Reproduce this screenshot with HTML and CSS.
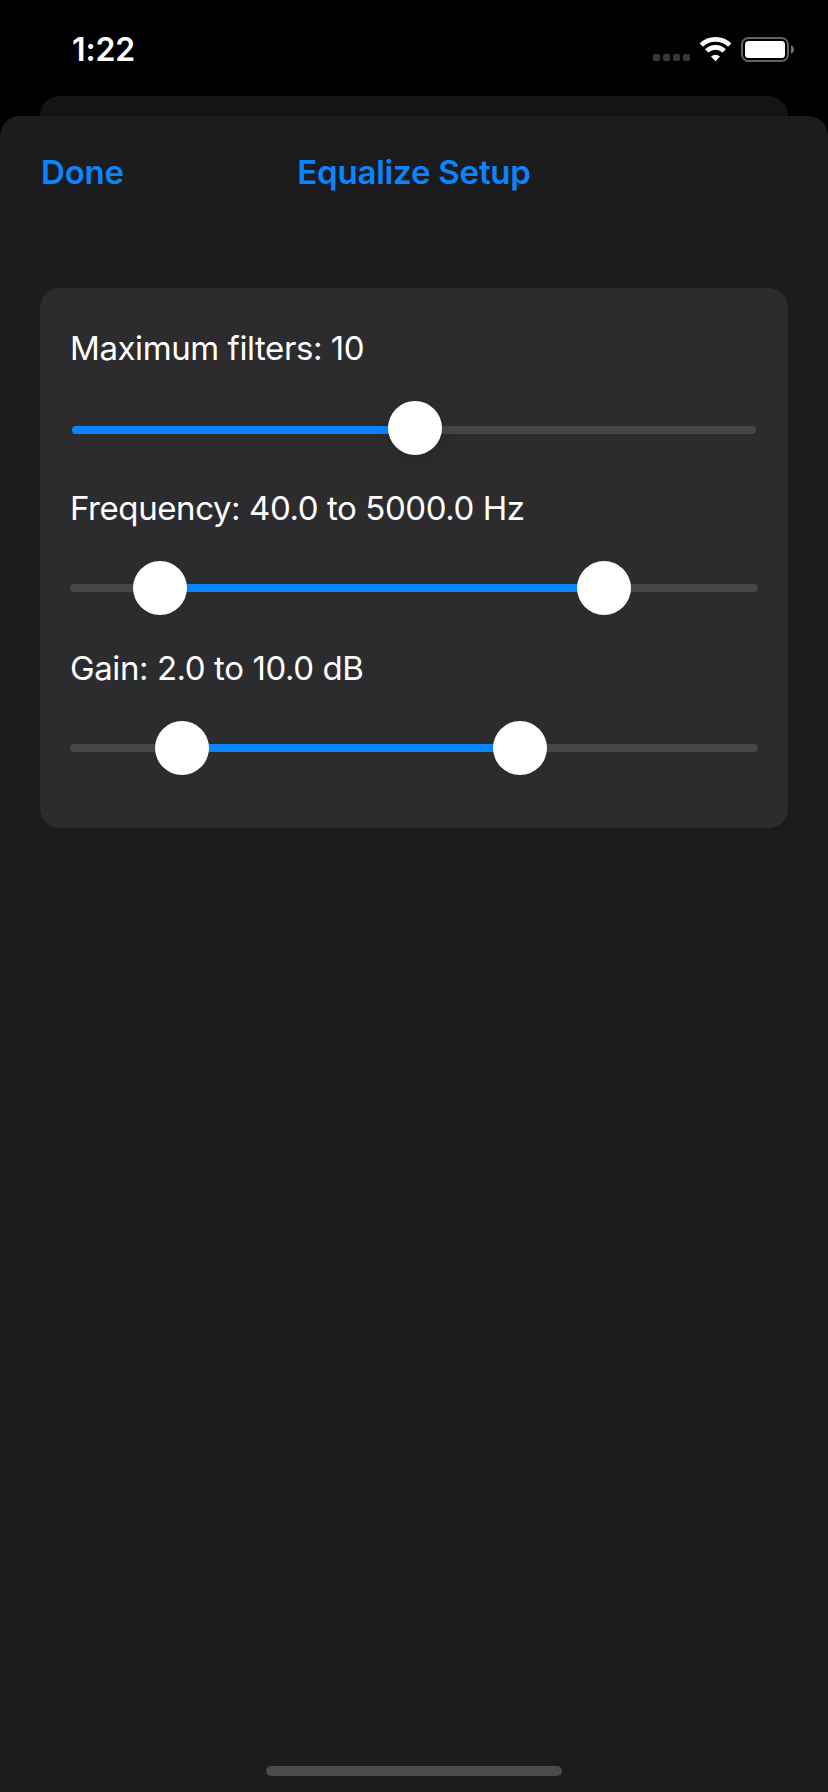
FILE: index.html
```html
<!DOCTYPE html>
<html lang="en">
<head>
<meta charset="utf-8">
<title>Equalize Setup</title>
<link rel="stylesheet" href="styles.css">
</head>
<body>
<div class="screen">
  <header class="status">
    <span class="time">1:22</span>
    <svg class="status-icons" width="146" height="28" viewBox="0 0 146 28" aria-hidden="true">
      <g fill="#373737">
        <rect x="3" y="18" width="7" height="7" rx="1.8"/>
        <rect x="13" y="18" width="7" height="7" rx="1.8"/>
        <rect x="23" y="18" width="7" height="7" rx="1.8"/>
        <rect x="33" y="18" width="7" height="7" rx="1.8"/>
      </g>
      <g fill="none" stroke="#fff" stroke-width="4.8">
        <path d="M51.3 9.1 A20.4 20.4 0 0 1 79.7 9.1"/>
        <path d="M56.8 14.9 A12.3 12.3 0 0 1 74.2 14.9"/>
      </g>
      <path d="M65.5 25.2 L61 20.6 A6.6 6.6 0 0 1 70 20.6 Z" fill="#fff"/>
      <rect x="92" y="2" width="46" height="23" rx="6.5" fill="none" stroke="#636363" stroke-width="2"/>
      <rect x="95" y="5" width="40" height="17" rx="3.5" fill="#fff"/>
      <path d="M141 9.2 C145 10.8 145 16.2 141 17.8 Z" fill="#737373"/>
    </svg>
  </header>
  <div class="back-sheet"></div>
  <main class="sheet">
    <nav class="navbar">
      <span class="done">Done</span>
      <h1 class="title">Equalize Setup</h1>
    </nav>
    <section class="card">
      <div class="label">Maximum filters: 10</div>
      <div class="slider slider-single">
        <b class="fill rounded" style="width:318px"></b><i class="thumb"></i><i class="rest last"></i>
      </div>
      <div class="label">Frequency: 40.0 to 5000.0 Hz</div>
      <div class="slider">
        <i class="rest" style="width:65px"></i><i class="thumb"></i><b class="fill" style="width:394px"></b><i class="thumb"></i><i class="rest last"></i>
      </div>
      <div class="label">Gain: 2.0 to 10.0 dB</div>
      <div class="slider">
        <i class="rest" style="width:87px"></i><i class="thumb"></i><b class="fill" style="width:288px"></b><i class="thumb"></i><i class="rest last"></i>
      </div>
    </section>
    <div class="home-indicator"></div>
  </main>
</div>
</body>
</html>
```

FILE: styles.css
```css
* {
  box-sizing: border-box;
}

body {
  margin: 0;
  background: #000;
  color: #fff;
  font-family: Inter, "Liberation Sans", sans-serif;
}

.screen {
  display: flex;
  flex-direction: column;
  width: 828px;
  height: 1792px;
  overflow: hidden;
}

.status {
  display: flex;
  justify-content: space-between;
  align-items: flex-start;
  height: 96px;
  padding: 30px 32px 0 72px;
}

.time {
  font-size: 32px;
  font-weight: 600;
  line-height: 40px;
  letter-spacing: -0.1px;
}

.status-icons {
  margin-top: 6px;
}

.back-sheet {
  height: 20px;
  margin: 0 40px;
  border-radius: 20px 20px 0 0;
  background: #141414;
}

.sheet {
  display: flex;
  flex: 1;
  flex-direction: column;
  padding: 0 40px;
  border-radius: 20px 20px 0 0;
  background: #1c1c1e;
}

.navbar {
  display: grid;
  grid-template-columns: 1fr auto 1fr;
  align-items: center;
  height: 112px;
  margin-bottom: 60px;
  color: #0a84ff;
  white-space: nowrap;
}

.done,
.title {
  margin: 0;
  font-size: 33px;
  font-weight: 600;
  line-height: 40px;
  letter-spacing: -0.2px;
}

.done {
  padding-left: 1px;
}

.card {
  height: 540px;
  padding: 20px 30px 40px;
  border-radius: 20px;
  background: #2c2c2e;
}

.label {
  height: 80px;
  font-size: 33px;
  line-height: 80px;
  letter-spacing: -0.42px;
  white-space: nowrap;
}

.slider {
  display: flex;
  align-items: center;
  height: 80px;
}

.slider-single {
  padding: 0 2px;
}

.slider-single .fill,
.slider-single .rest {
  margin-top: 4px;
}

.fill,
.rest {
  flex: none;
  height: 8px;
}

.fill {
  background: #0a84ff;
}

.fill.rounded,
.rest {
  border-radius: 4px 0 0 4px;
}

.rest {
  background: #464648;
}

.rest.last {
  flex: 1;
  border-radius: 0 4px 4px 0;
}

.thumb {
  position: relative;
  flex: none;
  width: 54px;
  height: 54px;
  margin: 0 -2px;
  border-radius: 50%;
  background: #fff;
}

.slider-single .thumb {
  box-shadow: 0 8px 20px rgba(0, 0, 0, 0.12);
}

.home-indicator {
  align-self: center;
  width: 296px;
  height: 10px;
  margin: auto 0 16px;
  border-radius: 5px;
  background: #4b4b4b;
}
```
